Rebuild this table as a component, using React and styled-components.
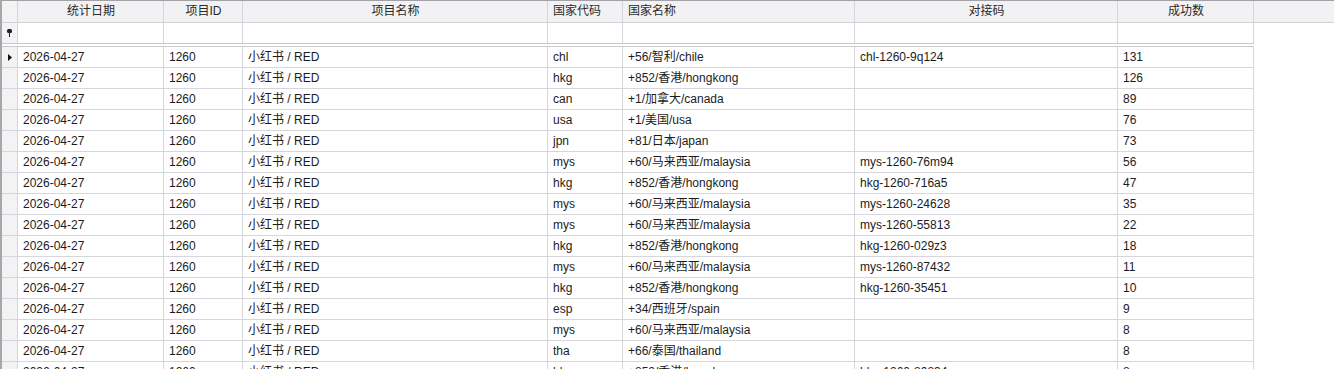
import React from "react";
import styled, { createGlobalStyle, css } from "styled-components";

const GlobalStyle = createGlobalStyle`
  html, body, #root {
    margin: 0;
    height: 100%;
    overflow: hidden;
    background: #ffffff;
  }
  body {
    font-family: "Liberation Sans", "Noto Sans CJK SC", sans-serif;
    font-size: 12px;
    color: #1c1c1c;
  }
`;

const COLUMNS = "16px 146px 79px 305px 75px 232px 263px 136px 1fr";
const LINE = "#d6d6dc";

const Grid = styled.div`
  height: 100%;
  border-left: 2px solid #a6a6ae;
  border-top: 1px solid #a2a2a6;
  box-sizing: border-box;
  overflow: hidden;
`;

const Row = styled.div`
  display: grid;
  grid-template-columns: ${COLUMNS};
  height: ${(p) => p.$height}px;
`;

const Cell = styled.div`
  box-sizing: border-box;
  display: flex;
  align-items: center;
  padding: 0 4px 1px 5px;
  white-space: nowrap;
  overflow: hidden;
  border-right: 1px solid ${LINE};
  ${(p) => p.$lined && css`border-bottom: 1px solid ${LINE};`}
`;

const Text = styled.span`
  display: block;
  height: 14px;
  line-height: 14px;
`;

const HeaderCell = styled(Cell)`
  background: #f2f2f5;
  color: #2a2a2a;
  justify-content: ${(p) => (p.$left ? "flex-start" : "center")};
  border-bottom: 1px solid #d0d0d6;
  border-right-color: #d4d4da;
`;

const HeaderFiller = styled.div`
  background: #f2f2f5;
  border-bottom: 1px solid #d0d0d6;
`;

const Indicator = styled(Cell)`
  background: #f3f3f3;
  padding: 0;
  justify-content: center;
`;

const Filler = styled.div``;

const Separator = styled.div`
  width: 1252px;
  height: 4px;
  box-sizing: border-box;
  border-top: 1px solid #c8c8ce;
  border-bottom: 1px solid #c8c8ce;
`;

const headers = [
  { label: "统计日期" },
  { label: "项目ID" },
  { label: "项目名称" },
  { label: "国家代码", left: true },
  { label: "国家名称", left: true },
  { label: "对接码" },
  { label: "成功数" },
];

const rows = [
  ["chl", "+56/智利/chile", "chl-1260-9q124", "131"],
  ["hkg", "+852/香港/hongkong", "", "126"],
  ["can", "+1/加拿大/canada", "", "89"],
  ["usa", "+1/美国/usa", "", "76"],
  ["jpn", "+81/日本/japan", "", "73"],
  ["mys", "+60/马来西亚/malaysia", "mys-1260-76m94", "56"],
  ["hkg", "+852/香港/hongkong", "hkg-1260-716a5", "47"],
  ["mys", "+60/马来西亚/malaysia", "mys-1260-24628", "35"],
  ["mys", "+60/马来西亚/malaysia", "mys-1260-55813", "22"],
  ["hkg", "+852/香港/hongkong", "hkg-1260-029z3", "18"],
  ["mys", "+60/马来西亚/malaysia", "mys-1260-87432", "11"],
  ["hkg", "+852/香港/hongkong", "hkg-1260-35451", "10"],
  ["esp", "+34/西班牙/spain", "", "9"],
  ["mys", "+60/马来西亚/malaysia", "", "8"],
  ["tha", "+66/泰国/thailand", "", "8"],
  ["hkg", "+852/香港/hongkong", "hkg-1260-80834", "8"],
];

const FilterIcon = () => (
  <svg width="7" height="9" viewBox="0 0 7 9">
    <rect x="1" y="0" width="5" height="4" rx="1.5" fill="#222" />
    <rect x="3" y="3" width="1" height="5" fill="#222" />
  </svg>
);

const CurrentRowIcon = () => (
  <svg width="4" height="7" viewBox="0 0 4 7">
    <path d="M0 0 L4 3.5 L0 7 Z" fill="#111" />
  </svg>
);

function DataGrid() {
  return (
    <Grid>
      <Row $height={22}>
        <HeaderCell as={Indicator} />
        {headers.map((h) => (
          <HeaderCell key={h.label} $left={h.left}>
            <Text>{h.label}</Text>
          </HeaderCell>
        ))}
        <HeaderFiller />
      </Row>

      <Row $height={20}>
        <Indicator>
          <FilterIcon />
        </Indicator>
        {headers.map((h) => (
          <Cell key={h.label} />
        ))}
        <Filler />
      </Row>

      <Separator />

      {rows.map((r, i) => (
        <Row key={i} $height={21}>
          <Indicator $lined>{i === 0 ? <CurrentRowIcon /> : null}</Indicator>
          <Cell $lined><Text>2026-04-27</Text></Cell>
          <Cell $lined><Text>1260</Text></Cell>
          <Cell $lined><Text>小红书 / RED</Text></Cell>
          <Cell $lined><Text>{r[0]}</Text></Cell>
          <Cell $lined><Text>{r[1]}</Text></Cell>
          <Cell $lined><Text>{r[2]}</Text></Cell>
          <Cell $lined><Text>{r[3]}</Text></Cell>
          <Filler />
        </Row>
      ))}
    </Grid>
  );
}

export default function App() {
  return (
    <>
      <GlobalStyle />
      <DataGrid />
    </>
  );
}
